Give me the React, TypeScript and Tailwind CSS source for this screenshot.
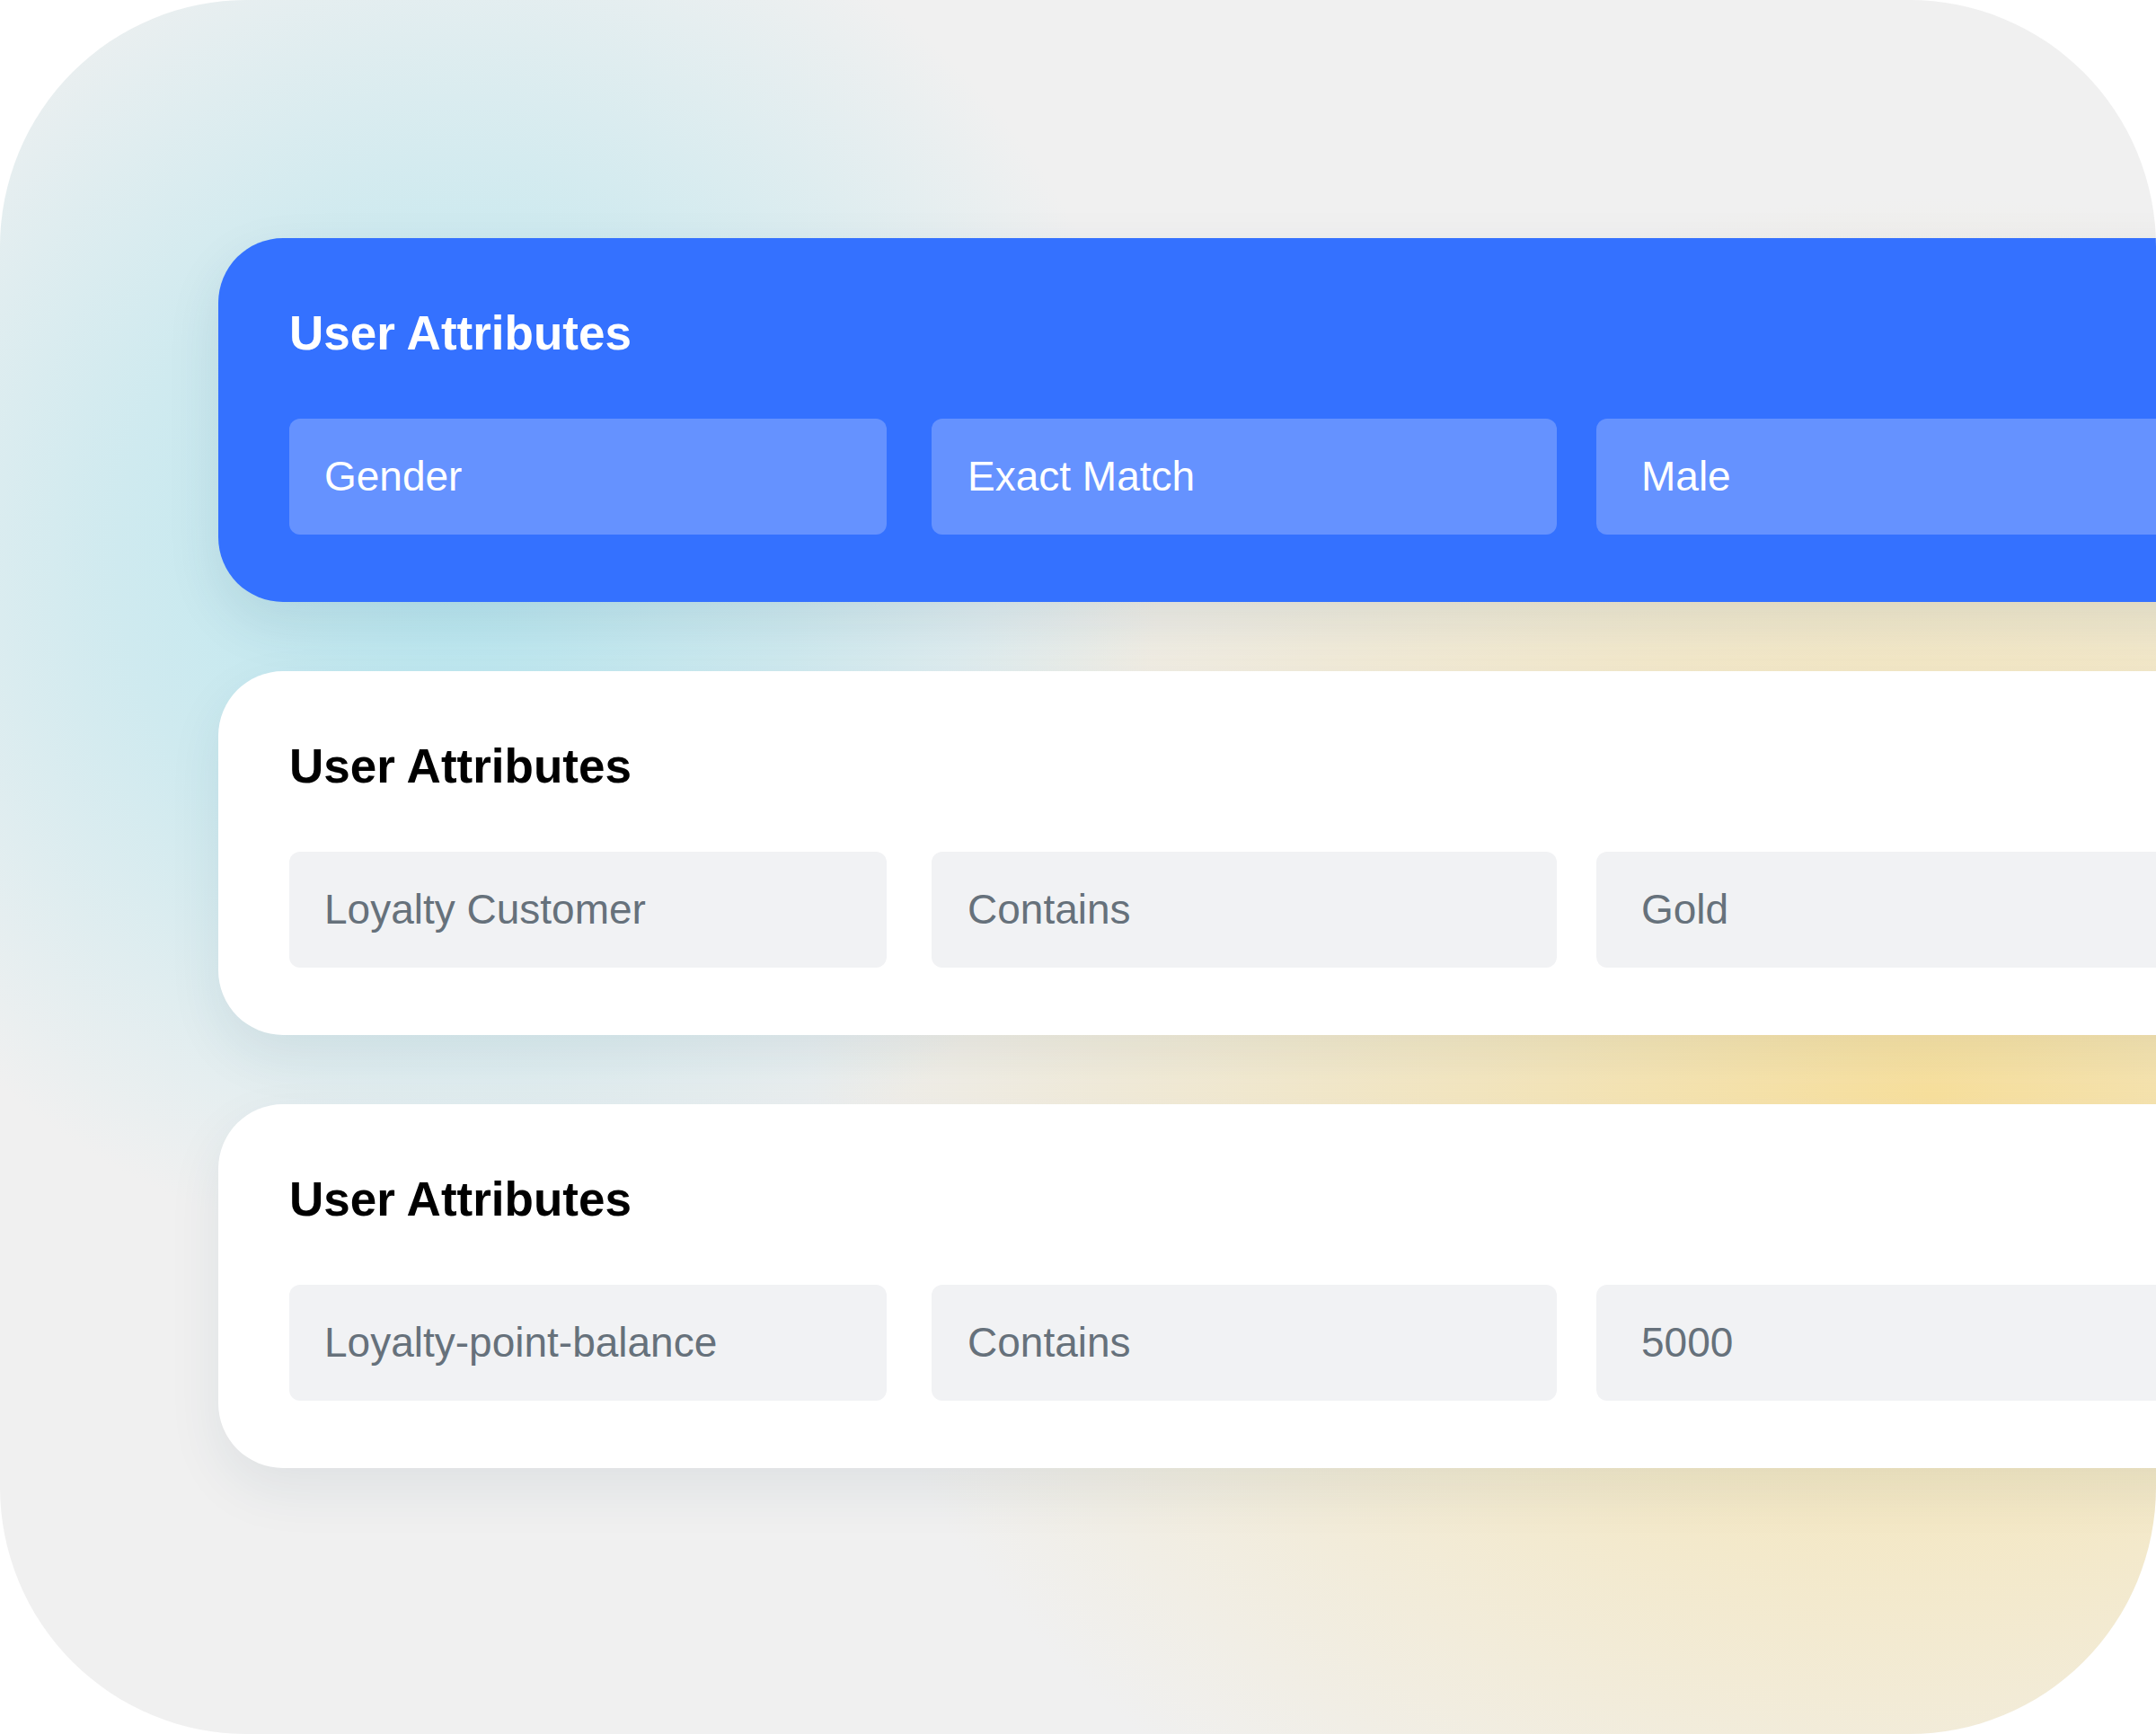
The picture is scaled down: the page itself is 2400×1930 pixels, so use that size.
const cards = [
  {
    tone: "blue",
    fields: ["Gender", "Exact Match", "Male"],
  },
  {
    tone: "white",
    fields: ["Loyalty Customer", "Contains", "Gold"],
  },
  {
    tone: "white",
    fields: ["Loyalty-point-balance", "Contains", "5000"],
  },
];

function AttributeCard({ tone, fields }: { tone: string; fields: string[] }) {
  const blue = tone === "blue";
  const fieldBox = blue
    ? "bg-[#6592ff] text-white"
    : "bg-[#f1f2f4] text-[#66717b]";

  return (
    <div
      className={
        blue
          ? "w-[2300px] h-[405px] shrink-0 rounded-l-[72px] bg-[#3471ff] pl-[79px] pt-[79px] shadow-[0_24px_60px_rgba(20,60,90,0.10)]"
          : "w-[2300px] h-[405px] shrink-0 rounded-l-[72px] bg-white pl-[79px] pt-[79px] shadow-[0_24px_60px_rgba(20,60,90,0.08)]"
      }
    >
      <h2
        className={
          blue
            ? "text-[53px] leading-[53px] font-bold text-white"
            : "text-[53px] leading-[53px] font-bold text-black"
        }
      >
        User Attributes
      </h2>
      <div className="mt-[69px] flex">
        <div className={`w-[665px] h-[129px] rounded-[12px] flex items-center pl-[39px] text-[46px] ${fieldBox}`}>
          {fields[0]}
        </div>
        <div className={`ml-[50px] w-[696px] h-[129px] rounded-[12px] flex items-center pl-[40px] text-[46px] ${fieldBox}`}>
          {fields[1]}
        </div>
        <div className={`ml-[44px] w-[700px] h-[129px] rounded-[12px] flex items-center pl-[50px] text-[46px] ${fieldBox}`}>
          {fields[2]}
        </div>
      </div>
    </div>
  );
}

export default function App() {
  return (
    <div className="w-[2400px] h-[1930px] bg-white font-['Liberation_Sans',Arial,sans-serif]">
      <div className="w-[2400px] h-[1930px] rounded-[275px] overflow-hidden bg-[#f0f0f0] bg-[radial-gradient(circle_at_510px_620px,rgba(184,231,240,1)_0px,rgba(196,232,239,0.75)_380px,rgba(240,240,240,0)_780px),radial-gradient(ellipse_1250px_1000px_at_2150px_1220px,rgba(249,225,158,1)_0%,rgba(246,227,172,0.7)_40%,rgba(240,240,240,0)_100%)] pl-[243px] pt-[265px] flex flex-col gap-[77px]">
        {cards.map((c, i) => (
          <AttributeCard key={i} tone={c.tone} fields={c.fields} />
        ))}
      </div>
    </div>
  );
}
